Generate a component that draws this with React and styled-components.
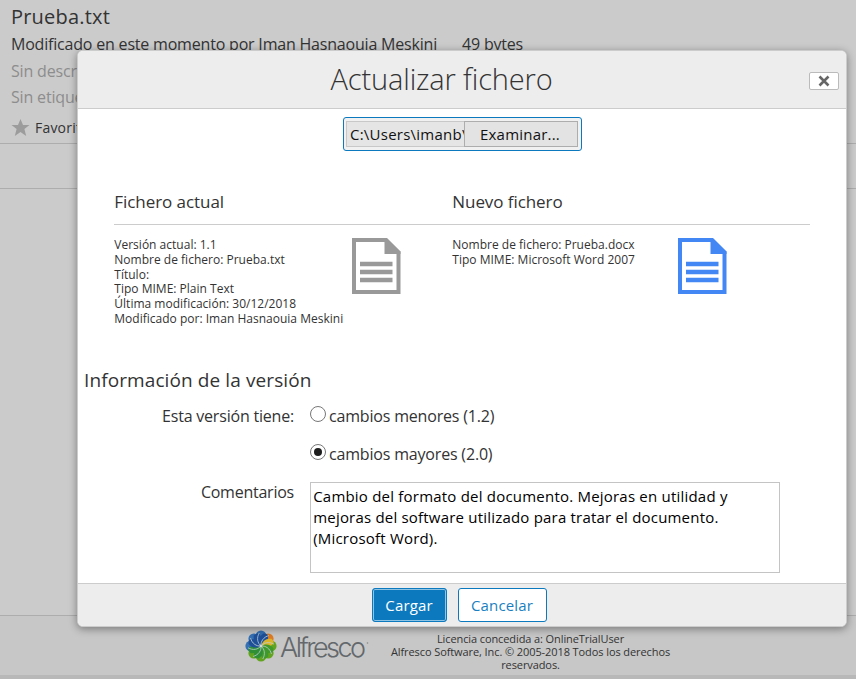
import React from 'react';
import styled, { createGlobalStyle, css } from 'styled-components';

const GlobalStyle = createGlobalStyle`
  * { box-sizing: border-box; }
  body { margin: 0; overflow: hidden; background: #cbcbcb; font-family: "Open Sans", sans-serif; color: #333; }
`;

const Page = styled.div`
  position: relative;
  display: flex;
  flex-direction: column;
  height: 679px;
  background: #cbcbcb;
`;

const Text = styled.div`
  font-size: ${(p) => p.$size}px;
  font-weight: ${(p) => p.$weight || 400};
  letter-spacing: ${(p) => p.$spacing || 0}px;
  line-height: ${(p) => p.$line}px;
  color: ${(p) => p.$color || '#333'};
  white-space: nowrap;
`;

const DocumentHeader = styled.header`
  height: 144px;
  padding: 4px 11px 0;
  border-bottom: 1px solid #adadad;
`;

const MetaLine = styled.div`
  display: flex;
  gap: 25px;
  margin-top: 1px;
  margin-bottom: 1px;
`;

const FavouriteLine = styled.div`
  display: flex;
  align-items: center;
  gap: 5px;
  height: 22px;
  margin-top: 7px;
`;

const Toolbar = styled.div`
  height: 45px;
  border-bottom: 1px solid #adadad;
`;

const Content = styled.main`
  flex: 1;
`;

const Footer = styled.footer`
  display: flex;
  gap: 21px;
  height: 64px;
  padding: 14px 0 0 245px;
  border-top: 1px solid #adadad;
  border-bottom: 4px solid #b8b8b8;
  background: #c7c7c7;
`;

const Licence = styled.div`
  width: 281px;
  padding-top: 2px;
  text-align: center;
`;

const Dialog = styled.section`
  position: absolute;
  left: 77px;
  top: 50px;
  width: 770px;
  height: 577px;
  display: flex;
  flex-direction: column;
  border: 1px solid #ccc;
  border-radius: 6px;
  background: #fff;
  box-shadow: 0 2px 8px rgba(0, 0, 0, 0.4);
`;

const DialogHeader = styled.header`
  display: grid;
  grid-template-columns: 252.5px 1fr 30px;
  align-items: center;
  height: 58px;
  padding-right: 7px;
  border-bottom: 1px solid #ccc;
  border-radius: 5px 5px 0 0;
  background: #ededed;
`;

const DialogTitle = styled(Text)`
  grid-column: 2;
  margin-top: -2px;
`;

const CloseButton = styled.button`
  display: grid;
  place-items: center;
  width: 30px;
  height: 18px;
  margin-top: 2px;
  padding: 0;
  border: 1px solid #bbb;
  border-radius: 2px;
  background: #fff;
`;

const DialogBody = styled.div`
  height: 474px;
  padding: 8px 0 0;
`;

const FilePicker = styled.div`
  display: flex;
  width: 239px;
  height: 34px;
  margin-left: 265px;
  padding: 3px 3px 3px 2px;
  border: 1px solid #0c79bf;
  border-radius: 3px;
  background: #f1f1f1;
`;

const PickerPath = styled.div`
  width: 118px;
  height: 26px;
  padding-left: 3px;
  overflow: hidden;
  border: 1px solid #c8c8c8;
  border-right: 0;
  background: #e5e5e5;
`;

const PickerButton = styled.div`
  flex: 1;
  height: 26px;
  padding-left: 15px;
  border: 1px solid #adadad;
  background: #e3e3e3;
`;

const FilesHeading = styled.div`
  display: grid;
  grid-template-columns: 338px 1fr;
  width: 696px;
  height: 74px;
  margin-left: 36px;
  padding: 39px 0 0 0.3px;
  border-bottom: 1px solid #ccc;
`;

const FilesGrid = styled.div`
  display: grid;
  grid-template-columns: 237.5px 100.5px 226px 1fr;
  width: 696px;
  height: 141px;
  margin-left: 36px;
  padding: 13px 0 0 0.3px;
`;

const IconCell = styled.div`
  svg { display: block; }
`;

const SectionTitle = styled(Text)`
  margin-left: 6px;
`;

const Form = styled.div`
  display: grid;
  grid-template-columns: 216px 470px;
  column-gap: 16px;
  margin-top: 9px;
`;

const Label = styled(Text)`
  text-align: right;
`;

const Option = styled.label`
  display: flex;
  gap: 3px;
  height: 38px;
`;

const Radio = styled.span`
  display: grid;
  place-items: center;
  width: 16px;
  height: 16px;
  margin-top: 3px;
  border: 1px solid #777;
  border-radius: 50%;

  ${(p) => p.$checked && css`
    &::after {
      content: '';
      width: 8px;
      height: 8px;
      border-radius: 50%;
      background: #1d1d1d;
    }
  `}
`;

const Comment = styled.div`
  width: 470px;
  height: 91px;
  margin-top: 3px;
  padding: 3px 2.2px;
  border: 1px solid #c4c4c4;
`;

const DialogFooter = styled.footer`
  display: flex;
  justify-content: center;
  gap: 11px;
  flex: 1;
  padding: 4px 6px 0 0;
  border-top: 1px solid #ccc;
  border-radius: 0 0 5px 5px;
  background: #ededed;
`;

const Button = styled.button`
  width: ${(p) => p.$width}px;
  height: 34px;
  padding: 0;
  border: 1px solid #0c79bf;
  border-radius: 3px;
  background: ${(p) => (p.$primary ? '#0c79bf' : '#fff')};
  box-shadow: ${(p) => (p.$primary ? 'inset 0 0 0 1px #8fc4e4' : 'none')};
  font-family: inherit;
`;

const DocIcon = ({ color }) => (
  <svg width="49" height="56" viewBox="0 0 49 56">
    <path d="M2 2H33.5L46.5 14.5V54H2Z" fill="#fff" stroke={color} strokeWidth="4" />
    <path d="M32.5 0H35L48.5 13.5V16H32.5Z" fill={color} />
    <path d="M8 26H40.5M8 34H40.5M8 42H40.5" stroke={color} strokeWidth="4.4" />
  </svg>
);

const PETALS = [
  [180, '#62a41f'], [135, '#62a41f'], [90, '#62a41f'], [225, '#62a41f'],
  [270, '#3570b4'], [315, '#3570b4'], [0, '#3570b4'], [45, '#dd7b22'],
];

const OVERLAPS = [
  [22.5, '#1f4f98'], [67.5, '#dcb52a'], [112.5, '#3f9a2b'], [157.5, '#3f9a2b'],
  [202.5, '#2f8f35'], [247.5, '#2f8f35'], [292.5, '#1f4f98'], [337.5, '#1f4f98'],
];

const AlfrescoLogo = () => (
  <svg width="124" height="34" viewBox="0 0 124 34">
    <g transform="translate(16 16)">
      {PETALS.map(([angle, fill]) => (
        <circle key={angle} cy="-10.2" r="5.4" fill={fill} transform={`rotate(${angle})`} />
      ))}
      {OVERLAPS.map(([angle, fill]) => (
        <path
          key={angle}
          d="M0 0C-4 -3 -5.6 -8 -2.6 -12.4Q0 -13.6 2.2 -12.9C4.6 -9 4.4 -4 0 0Z"
          fill={fill}
          transform={`rotate(${angle})`}
        />
      ))}
      {PETALS.map(([angle]) => (
        <path
          key={angle}
          d="M0 0C-3.6 -3 -4.6 -8 -1.8 -13"
          fill="none"
          stroke="#b9cbd0"
          strokeWidth="0.8"
          transform={`rotate(${angle})`}
        />
      ))}
      <circle r="1.4" fill="#cfd8d4" />
    </g>
    <text x="35" y="26.5" fontFamily="Inter, sans-serif" fontWeight="300" fontSize="27" fill="#63686c"
      textLength="86" lengthAdjust="spacing">Alfresco</text>
    <circle cx="122.5" cy="13" r="0.8" fill="#888" />
  </svg>
);

export default function App() {
  return (
    <Page>
      <GlobalStyle />
      <DocumentHeader>
        <Text $size={20} $spacing={0.2} $line={26}>Prueba.txt</Text>
        <MetaLine>
          <Text $size={16} $spacing={-0.196} $line={26}>Modificado en este momento por Iman Hasnaouia Meskini</Text>
          <Text $size={16} $spacing={-0.196} $line={26}>49 bytes</Text>
        </MetaLine>
        <Text $size={16} $spacing={-0.17} $line={26} $color="#8d8d8d">Sin descripción</Text>
        <Text $size={16} $spacing={-0.17} $line={26} $color="#8d8d8d">Sin etiquetas</Text>
        <FavouriteLine>
          <svg width="19" height="18" viewBox="0 0 19 18">
            <path d="M9.5 0L12 6H18.5L13.4 10L15.2 17L9.5 13L3.8 17L5.6 10L.5 6H7Z" fill="#9c9c9c" />
          </svg>
          <Text $size={14} $spacing={0.2} $line={26}>Favorito</Text>
        </FavouriteLine>
      </DocumentHeader>
      <Toolbar />
      <Content />
      <Footer>
        <AlfrescoLogo />
        <Licence>
          <Text $size={11} $spacing={-0.1} $line={13}>Licencia concedida a: OnlineTrialUser</Text>
          <Text $size={11} $spacing={-0.09} $line={13}>Alfresco Software, Inc. © 2005-2018 Todos los derechos</Text>
          <Text $size={11} $spacing={-0.09} $line={13}>reservados.</Text>
        </Licence>
      </Footer>

      <Dialog>
        <DialogHeader>
          <DialogTitle $size={29} $weight={300} $spacing={-0.13} $line={40}>Actualizar fichero</DialogTitle>
          <CloseButton aria-label="Cerrar">
            <svg width="12" height="12" viewBox="0 0 12 12">
              <path d="M1.5 1.5L10.5 10.5M10.5 1.5L1.5 10.5" stroke="#666" strokeWidth="2.6" />
            </svg>
          </CloseButton>
        </DialogHeader>
        <DialogBody>
          <FilePicker>
            <PickerPath><Text $size={15} $spacing={0.24} $line={24} $color="#111">C:\Users\imanb\</Text></PickerPath>
            <PickerButton><Text $size={15} $spacing={0.21} $line={24} $color="#111">Examinar...</Text></PickerButton>
          </FilePicker>
          <FilesHeading>
            <Text $size={17} $spacing={-0.06} $line={24}>Fichero actual</Text>
            <Text $size={17} $spacing={-0.07} $line={24}>Nuevo fichero</Text>
          </FilesHeading>
          <FilesGrid>
            <div>
              <Text $size={12} $spacing={0.01} $line={14.8}>Versión actual: 1.1</Text>
              <Text $size={12} $spacing={0.01} $line={14.8}>Nombre de fichero: Prueba.txt</Text>
              <Text $size={12} $spacing={0.01} $line={14.8}>Título:</Text>
              <Text $size={12} $spacing={0.01} $line={14.8}>Tipo MIME: Plain Text</Text>
              <Text $size={12} $spacing={0.01} $line={14.8}>Última modificación: 30/12/2018</Text>
              <Text $size={12} $spacing={0.01} $line={14.8}>Modificado por: Iman Hasnaouia Meskini</Text>
            </div>
            <IconCell><DocIcon color="#999" /></IconCell>
            <div>
              <Text $size={12} $spacing={0.01} $line={14.8}>Nombre de fichero: Prueba.docx</Text>
              <Text $size={12} $spacing={0.01} $line={14.8}>Tipo MIME: Microsoft Word 2007</Text>
            </div>
            <IconCell><DocIcon color="#4387f4" /></IconCell>
          </FilesGrid>
          <SectionTitle $size={19} $spacing={0.1} $line={28}>Información de la versión</SectionTitle>
          <Form>
            <Label $size={16} $spacing={-0.2} $line={26}>Esta versión tiene:</Label>
            <div>
              <Option><Radio /><Text $size={16} $spacing={-0.18} $line={26}>cambios menores (1.2)</Text></Option>
              <Option><Radio $checked /><Text $size={16} $spacing={-0.18} $line={26}>cambios mayores (2.0)</Text></Option>
            </div>
            <Label $size={16} $spacing={-0.24} $line={26}>Comentarios</Label>
            <Comment>
              <Text $size={15} $spacing={0.21} $line={21} $color="#000">Cambio del formato del documento. Mejoras en utilidad y</Text>
              <Text $size={15} $spacing={0.2} $line={21} $color="#000">mejoras del software utilizado para tratar el documento.</Text>
              <Text $size={15} $spacing={0.2} $line={21} $color="#000">(Microsoft Word).</Text>
            </Comment>
          </Form>
        </DialogBody>
        <DialogFooter>
          <Button $primary $width={75}><Text $size={15} $spacing={0.13} $line={30} $color="#fff">Cargar</Text></Button>
          <Button $width={89}><Text $size={15} $spacing={0.15} $line={30} $color="#1a7fc1">Cancelar</Text></Button>
        </DialogFooter>
      </Dialog>
    </Page>
  );
}
